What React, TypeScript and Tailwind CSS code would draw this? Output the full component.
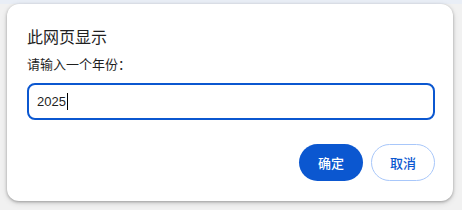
export default function App() {
  return (
    <div className="h-[210px] w-[462px] bg-[#f1f1f1] font-['Noto_Sans_CJK_SC',sans-serif] text-[#1f1f1f]">
      <div className="h-[4px] bg-[#e9eef6]" />
      <div className="ml-[7px] flex h-[197px] w-[446px] flex-col rounded-[12px] bg-white pl-[20px] pr-[18px] pt-[21px] shadow-[0_1px_3px_rgba(0,0,0,0.3),0_2px_6px_rgba(0,0,0,0.12)]">
        <h1 className="text-[16px] leading-[22px]">此网页显示</h1>
        <p className="mt-[8px] text-[13px] leading-[18px]">请输入一个年份：</p>
        <div className="mt-[10px] flex h-[37px] w-[408px] items-center rounded-[8px] border-2 border-[#0b57d0] px-[8px]">
          <span className="font-['Liberation_Sans',sans-serif] text-[13px]">2025</span>
          <span className="ml-[1px] h-[17px] w-px bg-black" />
        </div>
        <div className="mt-[24px] flex justify-end gap-[8px]">
          <button className="h-[37px] w-[64px] rounded-full bg-[#0b57d0] text-[13px] font-medium text-white">确定</button>
          <button className="h-[37px] w-[64px] rounded-full border border-[#a8c7fa] text-[13px] font-medium text-[#0b57d0]">取消</button>
        </div>
      </div>
    </div>
  );
}
